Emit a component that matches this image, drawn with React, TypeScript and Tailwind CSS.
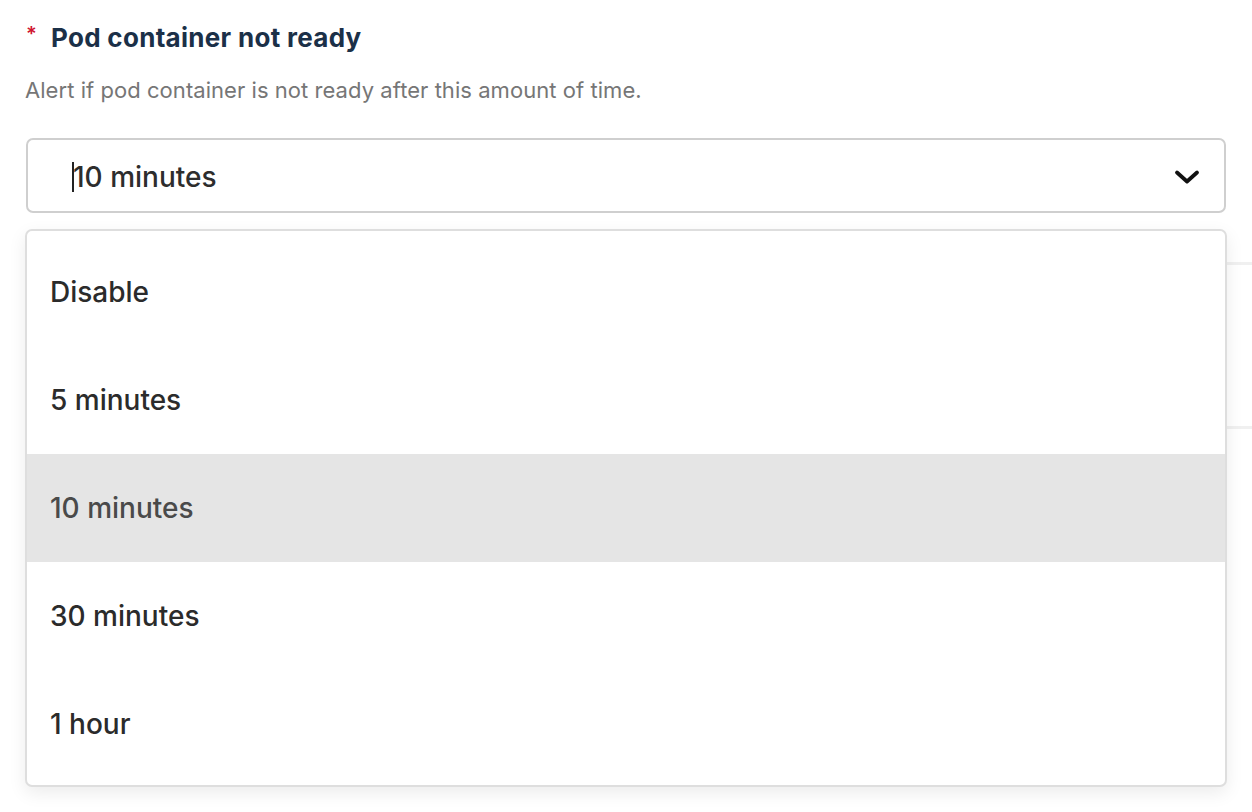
import React from "react";

const options = ["Disable", "5 minutes", "10 minutes", "30 minutes", "1 hour"];

export default function App() {
  return (
    <div
      className="relative w-[1252px] h-[812px] bg-white overflow-hidden"
      style={{ fontFamily: "Inter, 'Noto Sans', sans-serif" }}
    >
      {/* background lines peeking out behind dropdown */}
      <div className="absolute left-[1227px] top-[262px] w-[25px] h-[3px] bg-[#f0f0f0]" />
      <div className="absolute left-[1227px] top-[426px] w-[25px] h-[3px] bg-[#f0f0f0]" />

      <div className="px-[25px] pt-[20px]">
        <div className="flex items-center h-[34px]">
          <span className="text-[#d0162f] text-[20px] font-semibold w-[26px] pl-[1px] leading-none -mt-[6px]">*</span>
          <span className="text-[#1b3048] text-[26px] font-bold tracking-[0.3px]">Pod container not ready</span>
        </div>
        <p className="mt-[23px] text-[22px] leading-[26px] text-[#767676] tracking-[0.05px]">
          Alert if pod container is not ready after this amount of time.
        </p>

        <div className="mt-[35px] ml-[1px] w-[1200px] h-[75px] border-2 border-[#cfcfcf] rounded-[7px] flex items-center justify-between pl-[44px] pr-[24px]">
          <div className="flex items-center pt-[3px]">
            <span className="w-[2px] h-[30px] bg-[#222] -mr-[1px]" />
            <span className="text-[28px] font-medium text-[#2d2d2d]">10 minutes</span>
          </div>
          <svg width="26" height="16" viewBox="0 0 26 16" fill="none" className="mt-[2px]">
            <path d="M3 3.5 L13 12.5 L23 3.5" stroke="#111" strokeWidth="3.8" strokeLinecap="round" strokeLinejoin="round" />
          </svg>
        </div>

        <div className="relative mt-[16px] w-[1202px] rounded-[7px] border-2 border-[#dedede] bg-white py-[7px] shadow-[0_6px_18px_rgba(0,0,0,0.08)]">
          {options.map((o) => (
            <div
              key={o}
              className={
                "h-[108px] flex items-center pl-[23px] text-[28px] font-medium " +
                (o === "10 minutes" ? "bg-[#e5e5e5] text-[#4a4a4a]" : "text-[#2b2b2b]")
              }
            >
              {o}
            </div>
          ))}
        </div>
      </div>
    </div>
  );
}
